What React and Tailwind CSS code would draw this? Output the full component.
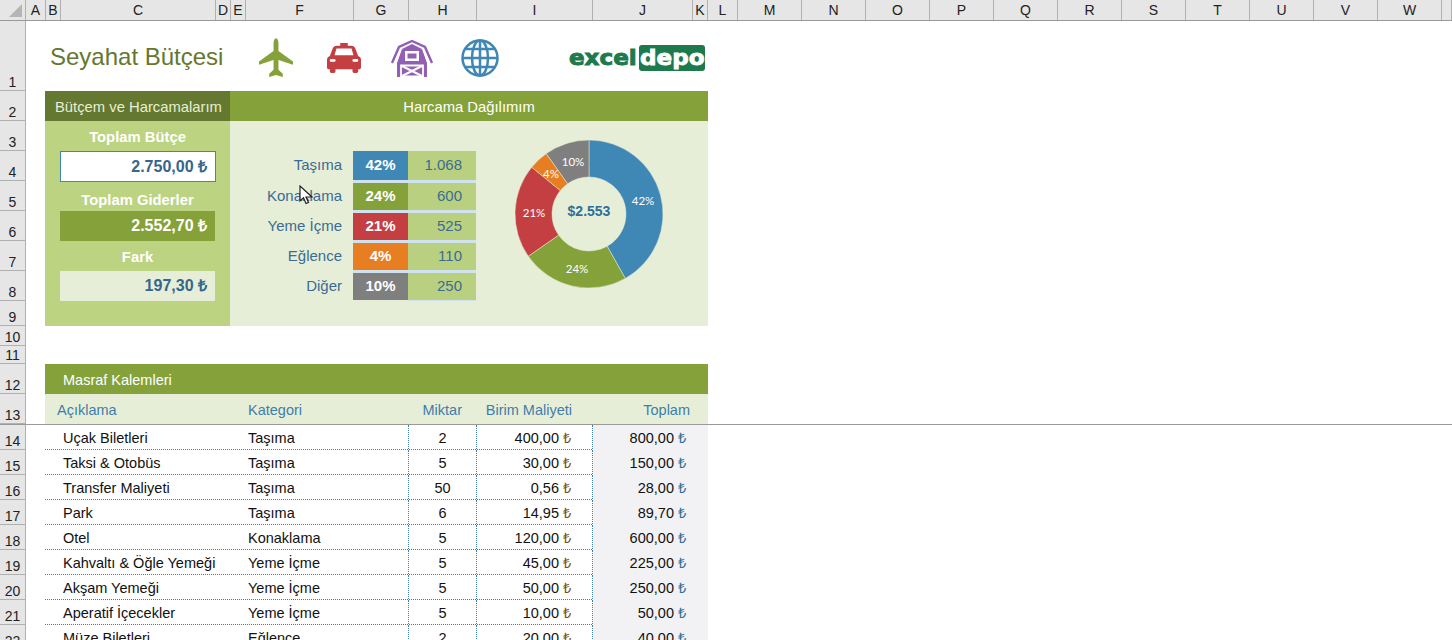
import React from "react";

const columns = [
  ["A", 20], ["B", 15], ["C", 155], ["D", 15], ["E", 15], ["F", 108], ["G", 55], ["H", 68],
  ["I", 116], ["J", 100], ["K", 15], ["L", 30], ["M", 64], ["N", 64], ["O", 64], ["P", 64],
  ["Q", 64], ["R", 64], ["S", 64], ["T", 64], ["U", 64], ["V", 64], ["W", 64], ["", 10],
];

const frozenRows = [
  [1, 70], [2, 30], [3, 30], [4, 30], [5, 30], [6, 30], [7, 30], [8, 30], [9, 25],
  [10, 20], [11, 18], [12, 30], [13, 30],
];

const spending = [
  { label: "Taşıma", pct: "42%", amount: "1.068", color: "bg-[#3f87b5]" },
  { label: "Konaklama", pct: "24%", amount: "600", color: "bg-[#85a23a]" },
  { label: "Yeme İçme", pct: "21%", amount: "525", color: "bg-[#c33f42]" },
  { label: "Eğlence", pct: "4%", amount: "110", color: "bg-[#e87e22]" },
  { label: "Diğer", pct: "10%", amount: "250", color: "bg-[#7f7f7f]" },
];

const expenses = [
  ["Uçak Biletleri", "Taşıma", "2", "400,00", "800,00"],
  ["Taksi & Otobüs", "Taşıma", "5", "30,00", "150,00"],
  ["Transfer Maliyeti", "Taşıma", "50", "0,56", "28,00"],
  ["Park", "Taşıma", "6", "14,95", "89,70"],
  ["Otel", "Konaklama", "5", "120,00", "600,00"],
  ["Kahvaltı & Öğle Yemeği", "Yeme İçme", "5", "45,00", "225,00"],
  ["Akşam Yemeği", "Yeme İçme", "5", "50,00", "250,00"],
  ["Aperatif İçecekler", "Yeme İçme", "5", "10,00", "50,00"],
  ["Müze Biletleri", "Eğlence", "2", "20,00", "40,00"],
];

const slices = [
  { value: 1068, color: "#3f87b5" },
  { value: 600, color: "#85a23a" },
  { value: 525, color: "#c33f42" },
  { value: 110, color: "#e87e22" },
  { value: 250, color: "#7f7f7f" },
];

const RowHead = ({ n, h }) => (
  <div
    className="flex items-end justify-center border-b border-[#b0b0b0] text-[14px] leading-[15px] text-[#222]"
    style={{ height: h }}
  >
    {n}
  </div>
);

const Donut = () => {
  const total = slices.reduce((sum, s) => sum + s.value, 0);
  let start = 0;
  const point = (r, a) => [75 + r * Math.sin(a), 75 - r * Math.cos(a)];
  return (
    <svg width="150" height="150" viewBox="0 0 150 150">
      {slices.map((s) => {
        const a0 = start;
        const a1 = start + (s.value / total) * Math.PI * 2;
        start = a1;
        const large = a1 - a0 > Math.PI ? 1 : 0;
        const [x0, y0] = point(74, a0);
        const [x1, y1] = point(74, a1);
        const [x2, y2] = point(37, a1);
        const [x3, y3] = point(37, a0);
        return (
          <path
            key={s.color}
            d={`M${x0} ${y0}A74 74 0 ${large} 1 ${x1} ${y1}L${x2} ${y2}A37 37 0 ${large} 0 ${x3} ${y3}Z`}
            fill={s.color}
            stroke="#e7eed8"
            strokeWidth="0.5"
          />
        );
      })}
      <g fill="#fff" fontSize="11.5" fontFamily="Lato, sans-serif" textAnchor="middle">
        <text x="129" y="66">42%</text>
        <text x="63" y="134">24%</text>
        <text x="20" y="78">21%</text>
        <text x="37" y="39">4%</text>
        <text x="59" y="27">10%</text>
      </g>
      <text x="75" y="77" fill="#2f6f99" fontSize="14" fontWeight="700" textAnchor="middle" fontFamily="Liberation Sans, sans-serif">
        $2.553
      </text>
    </svg>
  );
};

const Plane = () => (
  <svg width="34" height="40" viewBox="0 0 36 42" fill="#85a23a" className="shrink-0">
    <path d="M18 0c1.600 0 2.600 2.600 2.600 5.500v8.200L36 24.600v3.600l-15.400-5.100v10.300l4.600 4.300V41L18 38.900 10.800 41v-3.300l4.600-4.300V23.100L0 28.200v-3.600l15.400-10.900V5.500C15.400 2.600 16.400 0 18 0z" />
  </svg>
);

const Taxi = () => (
  <svg width="34" height="32" viewBox="0 0 36 32" fill="#c33f42" className="ml-[34px] shrink-0">
    <path d="M14 0h8v3h4c2 0 3 1 4 3l3 8c2 1 3 2 3 4v8c0 1-1 2-2 2h-1v2c0 1-1 2-2 2h-2c-1 0-2-1-2-2v-2H9v2c0 1-1 2-2 2H5c-1 0-2-1-2-2v-2H2c-1 0-2-1-2-2v-8c0-2 1-3 3-4l3-8c1-2 2-3 4-3h4V0zM10 6l-2 7h20l-2-7H10z" fillRule="evenodd" />
    <rect x="3" y="17" width="6" height="3" rx="1" fill="#fff" />
    <rect x="27" y="17" width="6" height="3" rx="1" fill="#fff" />
  </svg>
);

const Barn = () => (
  <svg width="42" height="38" viewBox="0 0 42 38" className="ml-[30px] shrink-0">
    <path d="M1 24L8 8l13-6 13 6 7 16" fill="none" stroke="#915fb3" strokeWidth="2.400" />
    <path d="M6 24l5-14 10-5 10 5 5 14v14H6z" fill="#915fb3" />
    <rect x="14" y="12" width="14" height="10" fill="#fff" />
    <rect x="16.500" y="14.500" width="9" height="5" fill="#915fb3" />
    <path d="M10 26.500h22v11H10z" fill="none" stroke="#fff" strokeWidth="1.800" />
    <path d="M11 27l20 10M31 27L11 37" stroke="#fff" strokeWidth="2" />
  </svg>
);

const Globe = () => (
  <svg width="38" height="38" viewBox="0 0 38 38" fill="none" stroke="#3f87b5" strokeWidth="2.500" className="ml-[28px] shrink-0">
    <circle cx="19" cy="19" r="17.500" />
    <ellipse cx="19" cy="19" rx="8" ry="17.500" />
    <path d="M19 1.500v35M1.500 19h35M4.500 10h29M4.500 28h29" />
  </svg>
);

const Cursor = () => (
  <svg className="absolute left-[299px] top-[185px]" width="14" height="20" viewBox="0 0 14 20">
    <path d="M1 1v15l3.500-3.200 2.500 5.700 2.500-1-2.500-5.500H13z" fill="#fff" stroke="#222" strokeWidth="1.200" />
  </svg>
);

const App = () => {
  return (
    <div className="relative h-[640px] w-[1452px] overflow-hidden bg-white font-['Liberation_Sans',Arial,sans-serif]">
      <div className="flex h-[21px] border-b border-[#9a9a9a] bg-[#e6e6e6]">
        <div className="flex w-[26px] items-end justify-end border-r border-[#b0b0b0] p-[3px]">
          <div className="h-0 w-0 border-b-[13px] border-l-[13px] border-b-[#b5b5b5] border-l-transparent" />
        </div>
        {columns.map(([name, w]) => (
          <div
            key={name}
            className="flex items-center justify-center border-r border-[#b0b0b0] text-[14px] text-[#222]"
            style={{ width: w }}
          >
            {name}
          </div>
        ))}
      </div>

      {/* donmuş bölme */}
      <div className="flex border-b border-[#9a9a9a]">
        <div className="w-[26px] shrink-0 border-r border-[#b0b0b0] bg-[#e6e6e6]">
          {frozenRows.map(([n, h]) => (
            <RowHead key={n} n={n} h={h} />
          ))}
        </div>
        <div className="ml-[19px] w-[663px]">
          <div className="flex h-[70px] items-center pb-[1px]">
            <h1 className="ml-[5px] mt-[2px] w-[200px] shrink-0 text-[24px] font-normal text-[#64782f]">Seyahat Bütçesi</h1>
            <div className="ml-[9px] mt-[5px] flex items-center">
              <Plane />
              <Taxi />
              <Barn />
              <Globe />
            </div>
            <div className="ml-auto mr-[3px] mt-[4px] flex items-center font-['DejaVu_Sans',sans-serif] text-[21px] font-bold leading-[26px] text-[#1c7a4c]">
              <div className="mr-[3px] w-[67px] text-center [-webkit-text-stroke:0.9px_#1c7a4c]">
                <span className="inline-block scale-x-110">excel</span>
              </div>
              <div className="w-[66px] rounded-[3px] bg-[#1c7a4c] text-center text-white [-webkit-text-stroke:0.8px_#fff]">
                <span className="inline-block scale-x-110">depo</span>
              </div>
            </div>
          </div>

          <div className="flex h-[30px] text-[14.8px] leading-[32px] text-white">
            <div className="w-[185px] bg-[#64782f] pl-[10px] text-[#e7eed8]">Bütçem ve Harcamalarım</div>
            <div className="flex-1 bg-[#85a23a] text-center">Harcama Dağılımım</div>
          </div>

          <div className="flex h-[205px]">
            <div className="flex w-[185px] flex-col bg-[#bcd382] pl-[15px] pr-[15px] text-[14.8px] font-bold">
              <div className="h-[30px] text-center leading-[32px] text-white">Toplam Bütçe</div>
              <div className="mr-[-1px] h-[31px] border border-[#3f87b5] bg-white pr-[8px] text-right text-[16px] leading-[29px] text-[#35668c]">2.750,00 ₺</div>
              <div className="h-[29px] text-center leading-[37px] text-white">Toplam Giderler</div>
              <div className="h-[30px] bg-[#85a23a] pr-[8px] text-right text-[16px] leading-[30px] text-white">2.552,70 ₺</div>
              <div className="h-[30px] text-center leading-[32px] text-white">Fark</div>
              <div className="h-[30px] bg-[#e7eed8] pr-[8px] text-right text-[16px] leading-[30px] text-[#35668c]">197,30 ₺</div>
            </div>
            <div className="flex flex-1 bg-[#e7eed8] pl-[15px] pt-[30px]">
              <div className="w-[231px]">
                {spending.map((row) => (
                  <div key={row.label} className="group flex h-[30px] text-[15px] first:h-[29px] last:h-[31px]">
                    <div className="flex w-[108px] items-center justify-end border-t-[3px] border-transparent pr-[11px] text-[#3c6c92] group-first:border-t-0">{row.label}</div>
                    <div className={`flex w-[55px] items-center justify-center border-t-[3px] border-[#cfe2ee] ${row.color} bg-clip-padding font-bold text-white group-first:border-t-0`}>{row.pct}</div>
                    <div className="flex w-[68px] items-center justify-end border-t-[3px] border-[#cfe2ee] bg-[#b8d07f] bg-clip-padding pr-[14px] text-[#3c6c92] group-first:border-t-0">{row.amount}</div>
                  </div>
                ))}
                <div className="ml-[163px] h-[1px] w-[68px] bg-[#cfe2ee]" />
              </div>
              <div className="ml-[38px] mt-[-12px]">
                <Donut />
              </div>
            </div>
          </div>

          <div className="h-[38px]" />

          <div className="h-[30px] bg-[#85a23a] pl-[18px] text-[14.5px] leading-[32px] text-white">Masraf Kalemleri</div>
          <div className="grid h-[30px] grid-cols-[203px_160px_69px_116px_115px] bg-[#e7eed8] text-[14.5px] leading-[32px] text-[#3f7ea8]">
            <div className="pl-[12px]">Açıklama</div>
            <div>Kategori</div>
            <div className="pr-[15px] text-right">Miktar</div>
            <div className="pr-[21px] text-right">Birim Maliyeti</div>
            <div className="pr-[18px] text-right">Toplam</div>
          </div>
        </div>
      </div>

      <div className="flex">
        <div className="w-[26px] shrink-0 border-r border-[#b0b0b0] bg-[#e6e6e6]">
          {expenses.map((row, i) => (
            <RowHead key={row[0]} n={i + 14} h={25} />
          ))}
        </div>
        <div className="ml-[19px] w-[663px]">
          {expenses.map((row) => (
            <div
              key={row[0]}
              className="grid h-[25px] grid-cols-[203px_160px_69px_116px_115px] border-b border-dotted border-[#3f7ea8] text-[14.5px] leading-[26px] text-[#111]"
            >
              <div className="pl-[18px]">{row[0]}</div>
              <div>{row[1]}</div>
              <div className="border-l border-r border-dotted border-[#3f7ea8] text-center">{row[2]}</div>
              <div className="border-r border-dotted border-[#3f7ea8] pr-[21px] text-right">
                {row[3]} <span className="text-[#7a5210]">₺</span>
              </div>
              <div className="bg-[#f2f2f4] pr-[22px] text-right">
                {row[4]} <span className="text-[#2f6f99]">₺</span>
              </div>
            </div>
          ))}
        </div>
      </div>

      <Cursor />
    </div>
  );
};

export default App;
